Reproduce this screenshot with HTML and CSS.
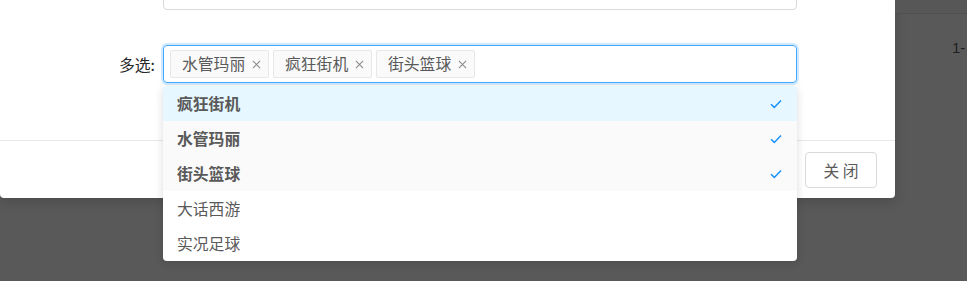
FILE: index.html
```html
<!DOCTYPE html>
<html lang="zh-CN">
<head>
    <meta charset="UTF-8">
    <title>多选</title>
    <link rel="stylesheet" href="styles.css">
</head>
<body>
    <div class="screen">
        <div class="modal">
            <div class="modal-body">
                <div class="form-row form-row-cut">
                    <label class="form-label">单选:</label>
                    <div class="input"></div>
                </div>
                <div class="form-row">
                    <label class="form-label">多选:</label>
                    <div class="select-wrap">
                        <div class="select is-focused">
                            <span class="tag">水管玛丽<svg class="tag-close" viewBox="0 0 10 10"><path d="M1 1 L9 9 M9 1 L1 9" /></svg></span>
                            <span class="tag">疯狂街机<svg class="tag-close" viewBox="0 0 10 10"><path d="M1 1 L9 9 M9 1 L1 9" /></svg></span>
                            <span class="tag">街头篮球<svg class="tag-close" viewBox="0 0 10 10"><path d="M1 1 L9 9 M9 1 L1 9" /></svg></span>
                        </div>
                        <ul class="dropdown">
                            <li class="option selected active">疯狂街机<svg class="check" viewBox="0 0 12 10"><path d="M1 5.2 L4.3 8.4 L11 1.4" /></svg></li>
                            <li class="option selected">水管玛丽<svg class="check" viewBox="0 0 12 10"><path d="M1 5.2 L4.3 8.4 L11 1.4" /></svg></li>
                            <li class="option selected">街头篮球<svg class="check" viewBox="0 0 12 10"><path d="M1 5.2 L4.3 8.4 L11 1.4" /></svg></li>
                            <li class="option">大话西游</li>
                            <li class="option">实况足球</li>
                        </ul>
                    </div>
                </div>
            </div>
            <div class="modal-footer">
                <button class="btn">关 闭</button>
            </div>
        </div>

        <div class="page-side">
            <div class="side-head"></div>
            <div class="side-cell">1-</div>
        </div>
    </div>
</body>
</html>
```

FILE: styles.css
```css
* {
    margin: 0;
    padding: 0;
    box-sizing: border-box;
}

body {
    font-family: "Noto Sans CJK SC", "Noto Sans", sans-serif;
    font-size: 15.8px;
    background-color: #595959;
    color: #595959;
    overflow: hidden;
}

.screen {
    display: flex;
    align-items: flex-start;
    height: 281px;
}

.modal {
    width: 895px;
    flex-shrink: 0;
    background-color: #fff;
    border-radius: 0 0 4px 4px;
    box-shadow: 0 4px 12px rgba(0, 0, 0, 0.15);
    margin-top: -27px;
}

.modal-body {
    padding: 0 0 57px 0;
    display: flex;
    flex-direction: column;
    gap: 35px;
}

.form-row {
    display: flex;
    align-items: center;
}

.form-label {
    width: 163px;
    padding-right: 8px;
    text-align: right;
    color: #262626;
}

.input {
    width: 634px;
    height: 37px;
    border: 1px solid #d9d9d9;
    border-radius: 4px;
}

.select-wrap {
    position: relative;
    width: 634px;
}

.select {
    height: 38px;
    border: 1px solid #40a9ff;
    border-radius: 4px;
    box-shadow: 0 0 0 2px rgba(24, 144, 255, 0.2);
    display: flex;
    align-items: flex-start;
    gap: 4px;
    padding: 4px 6px;
}

.tag {
    display: flex;
    align-items: center;
    height: 28px;
    width: 99px;
    padding: 0 7px 0 11px;
    background-color: #fafafa;
    border: 1px solid #e8e8e8;
    border-radius: 2px;
    color: #595959;
    line-height: 26px;
}

.tag-close {
    margin-left: auto;
    width: 9px;
    height: 9px;
    fill: none;
    stroke: #8c8c8c;
    stroke-width: 1.2;
}

.dropdown {
    position: absolute;
    left: 0;
    top: 41px;
    width: 634px;
    list-style: none;
    background-color: #fff;
    border-radius: 4px;
    box-shadow: 0 2px 8px rgba(0, 0, 0, 0.15);
    overflow: hidden;
    z-index: 10;
}

.option {
    display: flex;
    align-items: center;
    height: 35px;
    padding: 0 15px 0 14px;
    color: #595959;
}

.option.selected {
    background-color: #fafafa;
    font-weight: 600;
}

.option.active {
    background-color: #e6f7ff;
}

.check {
    margin-left: auto;
    width: 12px;
    height: 10px;
    fill: none;
    stroke: #1890ff;
    stroke-width: 1.5;
}

.modal-footer {
    border-top: 1px solid #e8e8e8;
    padding: 11px 18px 10px;
    display: flex;
    justify-content: flex-end;
}

.btn {
    width: 72px;
    height: 36px;
    background-color: #fff;
    border: 1px solid #d9d9d9;
    border-radius: 4px;
    font-family: inherit;
    font-size: 15.8px;
    color: #595959;
}

.page-side {
    flex: 1;
}

.side-head {
    height: 14px;
    background-color: #575757;
    border-bottom: 1px solid #4f4f4f;
}

.side-cell {
    padding: 25px 0 0 57px;
    font-family: "Liberation Sans", Arial, sans-serif;
    font-size: 15px;
    color: #1f1f1f;
}
```
